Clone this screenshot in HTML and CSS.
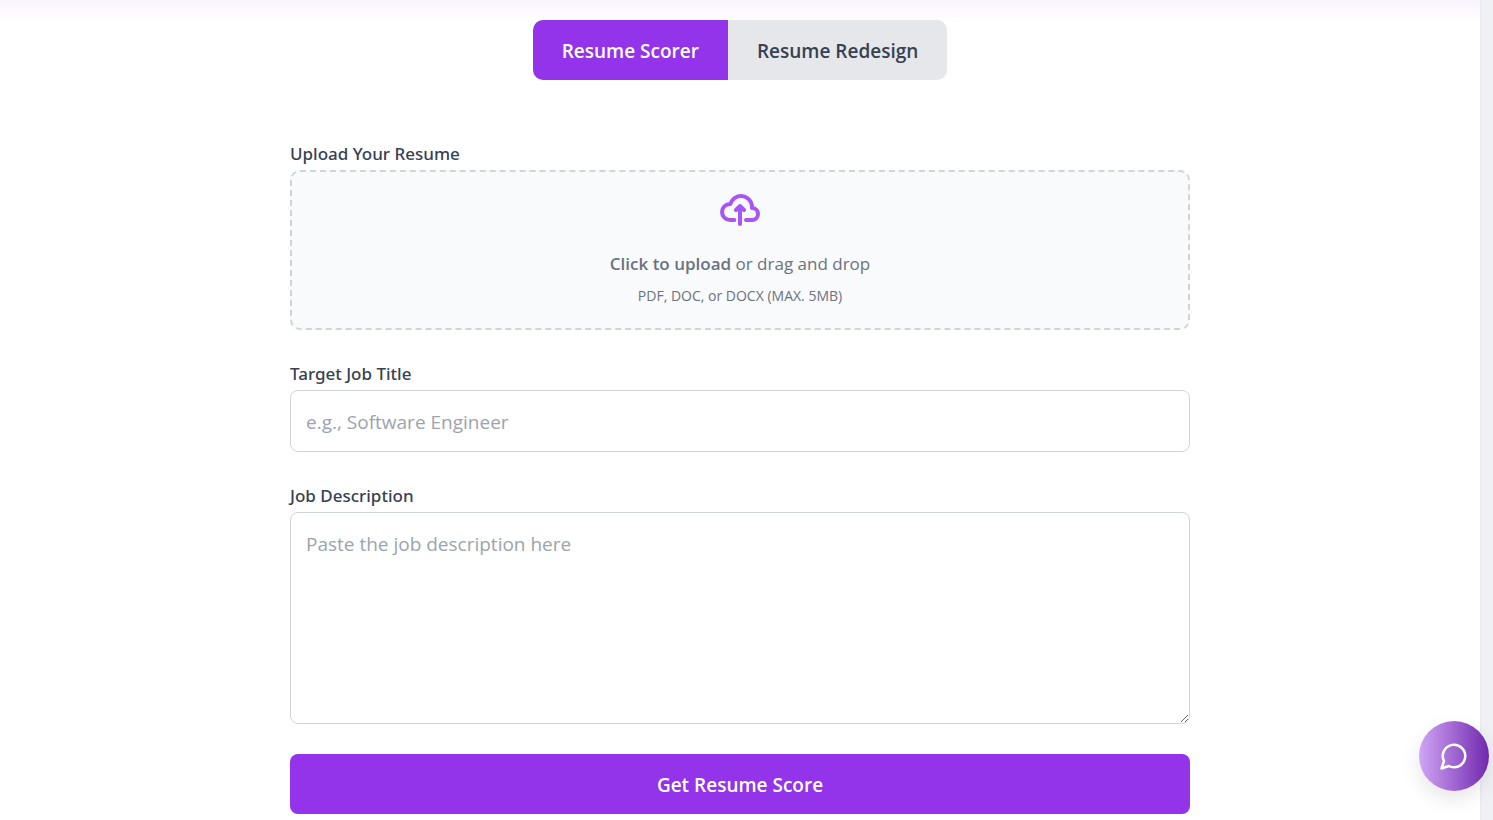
FILE: index.html
```html
<!DOCTYPE html>
<html lang="en">
<head>
<meta charset="utf-8">
<meta name="viewport" content="width=device-width, initial-scale=1">
<title>Resume Scorer</title>
<link rel="stylesheet" href="styles.css">
</head>
<body>
<div class="page">
  <main class="content">
    <div class="tabs">
      <button class="tab tab-active" type="button">Resume Scorer</button>
      <button class="tab" type="button">Resume Redesign</button>
    </div>
    <form class="form">
      <div class="field">
        <label class="label" for="resume">Upload Your Resume</label>
        <label class="dropzone" for="resume">
          <svg class="upload-icon" viewBox="0 0 20 16" fill="none" stroke="currentColor" stroke-width="2" stroke-linecap="round" stroke-linejoin="round" aria-hidden="true"><path d="M13 13h3a3 3 0 0 0 0-6h-.025A5.56 5.56 0 0 0 16 6.5 5.5 5.5 0 0 0 5.207 5.021C5.137 5.017 5.071 5 5 5a4 4 0 0 0 0 8h2.167M10 15V6m0 0L8 8m2-2 2 2"/></svg>
          <span class="drop-text"><strong>Click to upload</strong> or drag and drop</span>
          <span class="drop-hint">PDF, DOC, or DOCX (MAX. 5MB)</span>
          <input id="resume" type="file" accept=".pdf,.doc,.docx" hidden>
        </label>
      </div>
      <div class="field">
        <label class="label" for="title">Target Job Title</label>
        <input class="control" id="title" type="text" placeholder="e.g., Software Engineer">
      </div>
      <div class="field">
        <label class="label" for="description">Job Description</label>
        <textarea class="control" id="description" rows="6" placeholder="Paste the job description here"></textarea>
      </div>
      <button class="submit" type="submit">Get Resume Score</button>
    </form>
  </main>
  <div class="gutter"></div>
</div>
<button class="chat" type="button" aria-label="Open chat">
  <svg class="chat-icon" viewBox="0 0 24 24" fill="none" stroke="currentColor" stroke-width="2" stroke-linecap="round" stroke-linejoin="round" aria-hidden="true"><path d="M7.9 20A9 9 0 1 0 4 16.1L2 22Z"/></svg>
</button>
</body>
</html>
```

FILE: styles.css
```css
*, *::before, *::after { box-sizing: border-box; }

body {
  margin: 0;
  background: #fff;
  color: #374151;
  font-family: "Segoe UI", "Open Sans", "Noto Sans", sans-serif;
  font-size: 19px;
  line-height: 30px;
}

button, input, textarea { font: inherit; }
button { border: 0; cursor: pointer; }

.page {
  display: grid;
  grid-template-columns: 1fr 13px;
  min-height: 100vh;
}

.content {
  padding: 20px 20px 6px;
  background: linear-gradient(#faf5ff 0, #faf5ff 4px, #fff 24px);
}

.gutter {
  background: #f0f1f4;
  border-left: 1px solid #e9eaee;
}

.tabs {
  display: flex;
  width: fit-content;
  margin: 0 auto 60px;
  border-radius: 10px;
  overflow: hidden;
}

.tab {
  padding: 16px 29px 14px;
  background: #e5e7eb;
  color: #374151;
  font-weight: 600;
}

.tab-active { background: #9333ea; color: #fff; }

.form {
  display: flex;
  flex-direction: column;
  gap: 30px;
  max-width: 900px;
  margin: 0 auto;
}

.field { display: flex; flex-direction: column; gap: 4px; }

.label {
  padding-top: 1px;
  font-family: "Segoe UI", "Noto Sans", sans-serif;
  font-size: 17px;
  line-height: 25px;
  font-weight: 500;
}

.dropzone {
  display: flex;
  flex-direction: column;
  align-items: center;
  padding: 22px 20px;
  border: 2px dashed #d1d5db;
  border-radius: 10px;
  background: #f9fafb;
  color: #6b7280;
  cursor: pointer;
}

.upload-icon { width: 40px; height: 32px; margin-bottom: 25px; color: #a855f7; }
.drop-text { margin-bottom: 9px; font-size: 17px; line-height: 25px; }
.drop-text strong { font-weight: 600; }
.drop-hint { font-size: 14px; line-height: 21px; }

.control {
  display: block;
  width: 100%;
  padding: 16px 15px 14px;
  border: 1px solid #d1d5db;
  border-radius: 8px;
  background: #fff;
  color: #374151;
}

.control::placeholder { color: #9ca3af; opacity: 1; }
textarea.control { resize: vertical; }

.submit {
  padding: 16px 15px 14px;
  border-radius: 8px;
  background: #9333ea;
  color: #fff;
  font-weight: 600;
}

.chat {
  position: fixed;
  right: 4px;
  bottom: 29px;
  display: grid;
  place-items: center;
  width: 70px;
  height: 70px;
  padding: 0;
  border-radius: 50%;
  background: linear-gradient(90deg, #d0a5f5, #7029ae);
  color: #fff;
  box-shadow: 0 8px 20px rgba(0, 0, 0, 0.1);
}

.chat-icon { width: 30px; height: 30px; }
```
